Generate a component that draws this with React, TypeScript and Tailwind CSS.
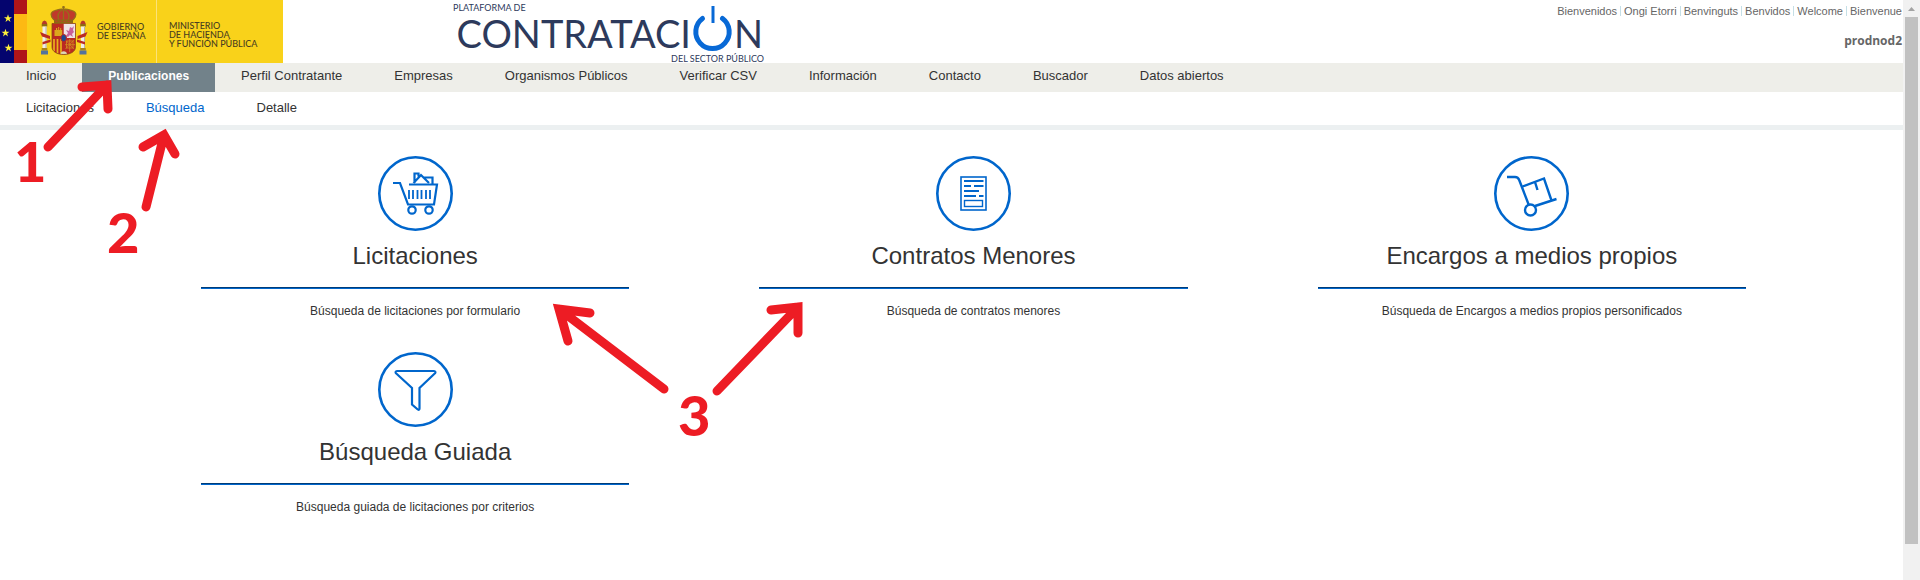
import type { ReactNode } from 'react';

const languages = ['Bienvenidos', 'Ongi Etorri', 'Benvinguts', 'Benvidos', 'Welcome', 'Bienvenue'];

const sections = [
  'Inicio',
  'Publicaciones',
  'Perfil Contratante',
  'Empresas',
  'Organismos Públicos',
  'Verificar CSV',
  'Información',
  'Contacto',
  'Buscador',
  'Datos abiertos',
];

const subsections = ['Licitaciones', 'Búsqueda', 'Detalle'];

const searches: { title: string; text: string; icon: ReactNode }[] = [
  {
    title: 'Licitaciones',
    text: 'Búsqueda de licitaciones por formulario',
    icon: (
      <>
        <path d="M15 27h7l8 21.500h26l3-20H31" strokeWidth="2.200" />
        <path d="M31 34v9M35 34v9M39.500 34v9M43.500 34v9M48 34v9M52 34v9" strokeWidth="1.800" />
        <path d="M36.500 27V17.500h4v3M35.500 27l7.500-8 8 8M45 21.500h9.500V28" strokeWidth="2.200" />
        <circle cx="34" cy="54" r="3.700" strokeWidth="2.200" />
        <circle cx="51" cy="54" r="3.700" strokeWidth="2.200" />
      </>
    ),
  },
  {
    title: 'Contratos Menores',
    text: 'Búsqueda de contratos menores',
    icon: (
      <>
        <rect x="25" y="21" width="25" height="33" strokeWidth="1.600" />
        <path d="M28 25h19.500M28 30h7M38 30h9.500M28 35h15M28 40h12M43 40h4.500" strokeWidth="2.200" />
        <rect x="28.500" y="44.500" width="18" height="6" strokeWidth="1.400" />
      </>
    ),
  },
  {
    title: 'Encargos a medios propios',
    text: 'Búsqueda de Encargos a medios propios personificados',
    icon: (
      <>
        <path d="M13 21h8c2 0 3.500 1 4.200 3L35 49.500" strokeWidth="2.400" />
        <path d="M28.500 30.500l21.500-8 7.500 22M41 26l2.500 8M41 50l21.500-7" strokeWidth="2.400" />
        <circle cx="36.500" cy="54" r="5.500" strokeWidth="2.400" />
      </>
    ),
  },
  {
    title: 'Búsqueda Guiada',
    text: 'Búsqueda guiada de licitaciones por criterios',
    icon: (
      <path
        d="M19 19h37c1.500 0 1.800 1.500 1 2.300L41.500 36v20.500c0 1.300-1 1.700-2 .8L34 52.500V36L18 21.300c-.8-.8-.5-2.300 1-2.300z"
        strokeWidth="2.200"
      />
    ),
  },
];

const star = 'M0-4.200L1-1.300H4L1.600.5 2.500 3.400 0 1.600-2.500 3.400-1.600.5-4-1.300H-1z';

function Pillar({ x }: { x: number }) {
  return (
    <g transform={`translate(${x} 0)`}>
      <path d="M-2.800 24l1-2.500L0 20.500l1.800 1 1 2.500z" fill="#b5382b" />
      <path d="M-2.800 24h5.600v2.500h-5.600z" fill="#8c6a14" />
      <path d="M-2 26.500h4V48h-4z" fill="#f1eee6" />
      <path d="M1 26.500h1V48H1z" fill="#b4b3ac" />
      <path d="M-2.800 48h5.600v2.500h-5.600z" fill="#a8821c" />
      <path d="M-3.500 50.500h7v4h-7z" fill="#54739c" />
    </g>
  );
}

function GovernmentLogo() {
  return (
    <svg className="h-[63px] w-[283px] shrink-0" viewBox="0 0 283 63" role="img" aria-label="Gobierno de España">
      <path d="M0 0h283v63H0z" fill="#f9d21a" />
      <path d="M0 0h14v63H0z" fill="#04046e" />
      <path d="M14 0h13v63H14z" fill="#b01519" />
      <path d="M14 14h13v36H14z" fill="#fdb913" />
      <path d={star} transform="translate(8 18.500)" fill="#fff13a" />
      <path d={star} transform="translate(5.500 33)" fill="#fff13a" />
      <path d={star} transform="translate(8.500 48)" fill="#fff13a" />
      <path d="M156.500 0v63" stroke="#fbe27a" />

      {/* crown */}
      <path d="M54 20c-4-3-4-8 0-9 2-1 5-2 9.500-2s7.500 1 9.500 2c4 1 4 6 0 9z" fill="#c0392b" />
      <path
        d="M54 20c-4-4-4-8 1-9.500 3-1 6-1.500 8.500-1.500s5.500.5 8.500 1.500c5 1.500 5 5.500 1 9.500M59 20c-2-4-1-8 4.500-11C69 12 70 16 68 20M63.500 6v14M62 7.200h3"
        fill="none"
        stroke="#94701a"
        strokeWidth="1.300"
      />
      <path d="M54 19.500h19V23H54z" fill="#8c6a14" />
      <path d="M55.500 21.300h16" stroke="#c23a2c" strokeDasharray="2 2" />

      {/* shield */}
      <path d="M52 23.500h23.500V47c0 4.500-5 7.500-11.700 7.500S52 51.500 52 47z" fill="#bb2a22" />
      <path d="M63.700 23.500h11.800v14.500H63.700z" fill="#efe4e6" />
      <path d="M66 36l2-3-2-3 3 1 1-4 2 1 2-2-1 4 1 2-2 2 1 3-3-2-2 2z" fill="#c8609a" />
      <path d="M54.500 36v-6H56v-2h1.200v2h1v-3h1v3h1v-2h1v2h1v6z" fill="#dca71c" />
      <path d="M54 39v12M57.500 39v14M61 39v15" stroke="#e8b21b" strokeWidth="1.700" />
      <path d="M65.500 40l8.500 9M74 40l-8.500 9M69.700 39v13M65 44.700h10M66.500 41h6.500v7h-6.500z" fill="none" stroke="#cf8f20" strokeWidth=".8" />
      <ellipse cx="63.700" cy="38" rx="2.800" ry="3.600" fill="#1e4a92" stroke="#bb2a22" />
      <path d="M60.500 54.300c0-4 6.500-4 6.500 0z" fill="#ddd6b5" />
      <path d="M52 23.500h23.500V47c0 4.500-5 7.500-11.700 7.500S52 51.500 52 47z" fill="none" stroke="#8c4a14" strokeWidth=".8" />

      {/* pillars of Hercules with their ribbons */}
      <Pillar x={44.500} />
      <Pillar x={83} />
      <path d="M40 32l10 4v3l-8-2.500zM42.500 42l8-2.500v2.500l-8 2.500z" fill="#bb2a22" />
      <path d="M87.500 32l-10 4v3l8-2.500zM85 42l-8-2.500v2.500l8 2.500z" fill="#bb2a22" />

      <g fill="#4a4020" className="font-['Lato',sans-serif] text-[9px] font-medium">
        <text x="97" y="30">GOBIERNO</text>
        <text x="97" y="39">DE ESPAÑA</text>
        <text x="169" y="29">MINISTERIO</text>
        <text x="169" y="38">DE HACIENDA</text>
        <text x="169" y="47">Y FUNCIÓN PÚBLICA</text>
      </g>
    </svg>
  );
}

function PlatformLogo() {
  return (
    <svg
      className="ml-[169px] h-[63px] w-[316px] shrink-0 font-['Lato',sans-serif]"
      viewBox="0 0 316 63"
      role="img"
      aria-label="Plataforma de Contratación del Sector Público"
    >
      <g fill="#2d3a5c">
        <text x="1" y="11" className="text-[9px]">PLATAFORMA DE</text>
        <text x="239" y="48" textAnchor="end" className="text-[38px]">CONTRATACI</text>
        <text x="282" y="48" className="text-[38px]">N</text>
        <text x="312" y="62" textAnchor="end" className="text-[9px]">DEL SECTOR PÚBLICO</text>
      </g>
      <path d="M250.500 18.500a16.700 16.700 0 1 0 20 0" fill="none" stroke="#0869d6" strokeWidth="5" strokeLinecap="round" />
      <path d="M261 6v17" stroke="#0869d6" strokeWidth="3" />
    </svg>
  );
}

function Annotations() {
  return (
    <svg
      className="pointer-events-none absolute top-0 left-0 h-[460px] w-[840px]"
      viewBox="0 0 840 460"
      aria-hidden="true"
    >
      <g fill="none" stroke="#ed1c24" strokeWidth="9" strokeLinecap="round">
        <path d="M48 147L107 85M82 87l25-2 1 24" />
        <path d="M146 207l18-72M143 147l21-12 11 19" />
        <path d="M664 389L559 309M590 313l-31-4 9 32" />
        <path d="M717 391l81-84M771 310l27-3v26" />
      </g>
      <g fill="#ed1c24" className="font-['Lato',sans-serif] text-[56px] font-black">
        <text x="14" y="182">1</text>
        <text x="107" y="253">2</text>
        <text x="678" y="436">3</text>
      </g>
    </svg>
  );
}

export default function App() {
  return (
    <div className="relative flex min-h-screen bg-white font-['Liberation_Sans',Arial,sans-serif] text-[#333333]">
      <div className="min-w-0 flex-1">
        <header className="flex items-start">
          <GovernmentLogo />
          <PlatformLogo />
          <div className="ml-auto flex flex-col items-end gap-[14px] pt-[3px] pr-px text-[#666666]">
            <ul className="flex items-center text-[11px] leading-4">
              {languages.map((language, i) => (
                <li key={language} className="flex items-center">
                  {i > 0 && <span className="mx-[3px] h-[10px] w-px bg-[#c5dfe6]" />}
                  <a href="#">{language}</a>
                </li>
              ))}
            </ul>
            <span className="font-['Open_Sans',sans-serif] text-xs font-bold">prodnod2</span>
          </div>
        </header>

        <nav className="flex h-[29px] bg-[#eeeee9] text-[13px] leading-[26px]">
          {sections.map((section) => (
            <a
              key={section}
              href="#"
              className={
                section === 'Publicaciones'
                  ? 'bg-[#72828a] px-[26px] text-[12px] leading-[26px] font-bold text-white'
                  : 'px-[26px]'
              }
            >
              {section}
            </a>
          ))}
        </nav>
        <nav className="flex h-[38px] border-b-[5px] border-[#ecf0f1] text-[13px] leading-[31px]">
          {subsections.map((section) => (
            <a key={section} href="#" className={section === 'Búsqueda' ? 'px-[26px] text-[#0066cc]' : 'px-[26px]'}>
              {section}
            </a>
          ))}
        </nav>

        <main className="grid grid-cols-3 gap-y-[33px] pt-[26px] pr-[92px] pl-[136px]">
          {searches.map((search) => (
            <a key={search.title} href="#" className="block px-[65px] text-center">
              <svg className="mx-auto size-[75px]" viewBox="0 0 75 75" fill="none" stroke="#0066cc">
                <circle cx="37.500" cy="37.500" r="36.200" strokeWidth="2.600" />
                {search.icon}
              </svg>
              <h2 className="mt-[9px] text-2xl leading-8">{search.title}</h2>
              <div className="mt-[15px] h-[2px] border-t border-[#003c78] bg-[#0066cc]" />
              <p className="mt-[14px] text-xs">{search.text}</p>
            </a>
          ))}
        </main>
      </div>

      {/* scrollbar */}
      <div className="flex w-[17px] shrink-0 flex-col bg-[#f1f1f1]">
        <svg className="size-[17px]" viewBox="0 0 17 17" fill="#a3a3a3">
          <path d="M5 11l3.500-4 3.500 4z" />
        </svg>
        <div className="mx-[2px] mb-9 flex-1 bg-[#c1c1c1]" />
      </div>

      <Annotations />
    </div>
  );
}
